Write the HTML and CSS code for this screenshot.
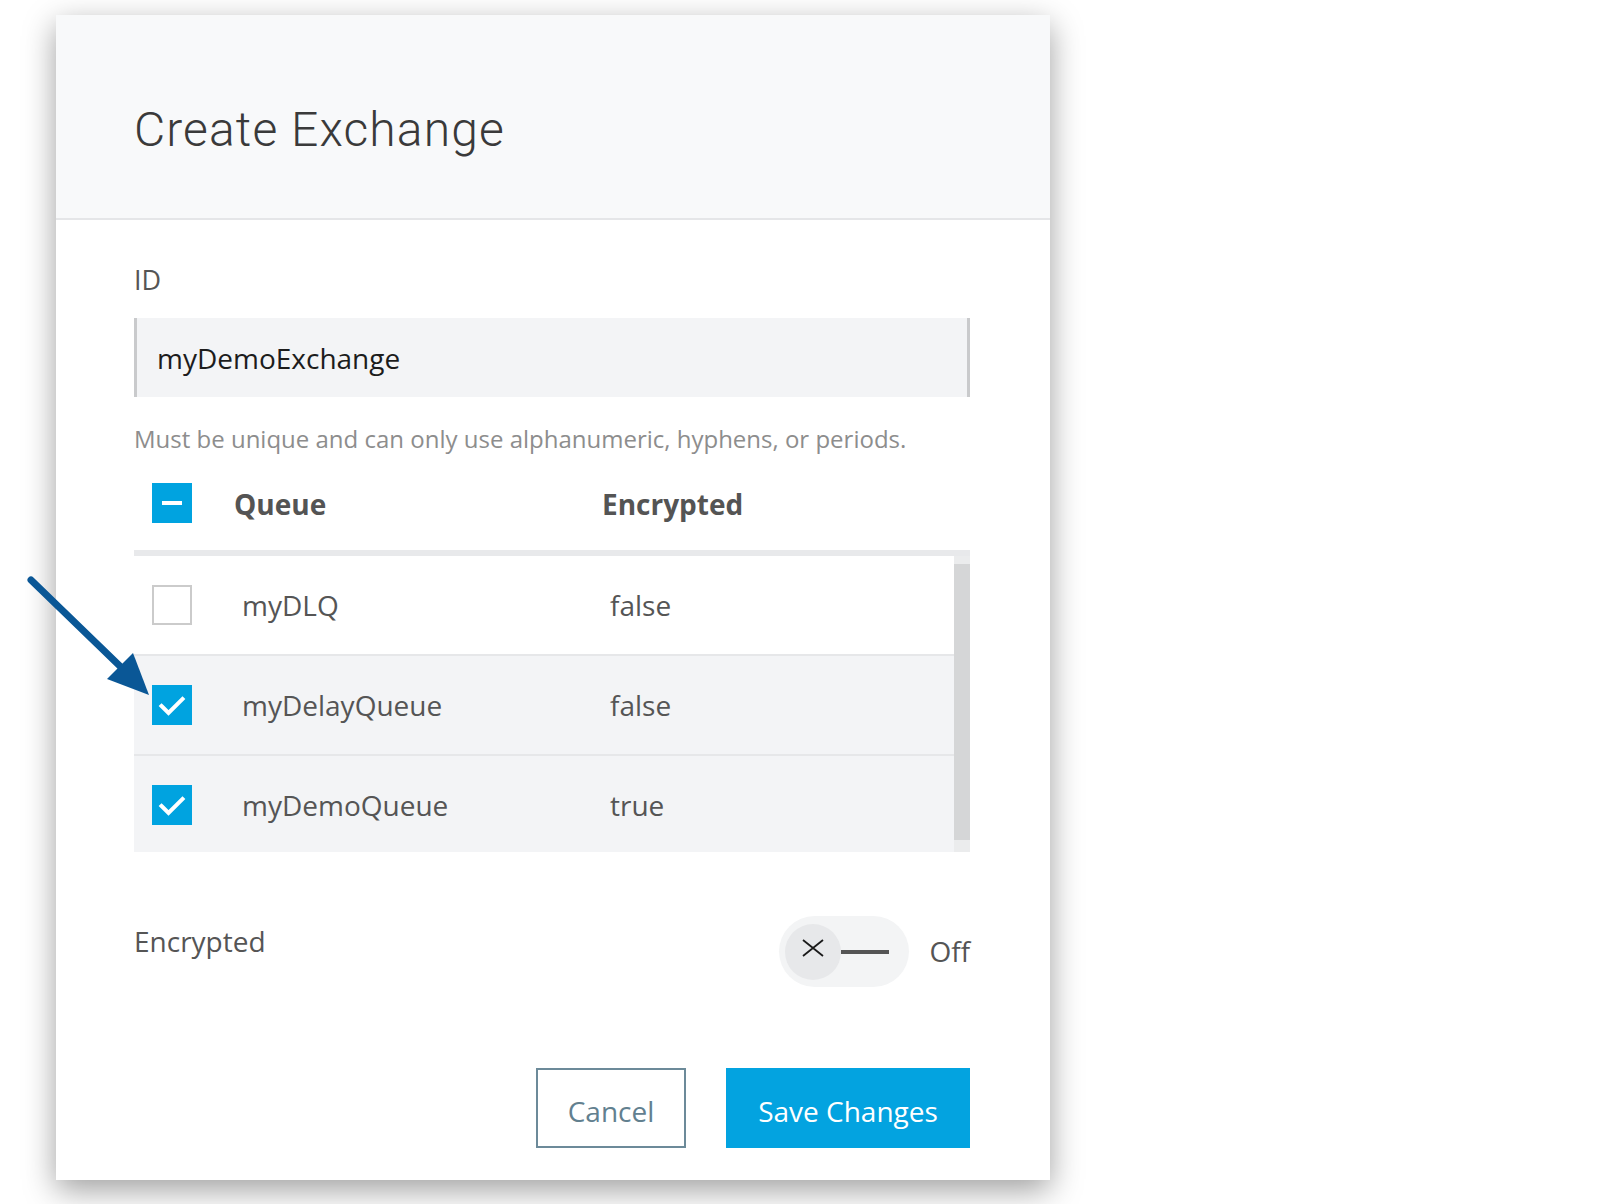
FILE: index.html
```html
<!DOCTYPE html>
<html lang="en">
<head>
<meta charset="utf-8">
<title>Create Exchange</title>
<link rel="stylesheet" href="styles.css">
</head>
<body>
<div class="page">
  <div class="modal">
    <header class="modal-header">
      <h1 class="title">Create Exchange</h1>
    </header>
    <div class="modal-body">
      <div class="field-label">ID</div>
      <div class="input">myDemoExchange</div>
      <p class="help">Must be unique and can only use alphanumeric, hyphens, or periods.</p>

      <div class="table">
        <div class="thead">
          <span class="cb cb-on"><span class="dash"></span></span>
          <span class="th th-queue">Queue</span>
          <span class="th">Encrypted</span>
        </div>
        <div class="tbody">
          <div class="rows">
            <div class="row">
              <span class="cb cb-off"></span>
              <span class="td td-name">myDLQ</span>
              <span class="td">false</span>
            </div>
            <div class="row row-selected">
              <span class="cb cb-on"><svg class="check" viewBox="0 0 40 40"><polyline points="9.5,21 16.5,28 30.5,14"/></svg></span>
              <span class="td td-name">myDelayQueue</span>
              <span class="td">false</span>
            </div>
            <div class="row row-selected">
              <span class="cb cb-on"><svg class="check" viewBox="0 0 40 40"><polyline points="9.5,21 16.5,28 30.5,14"/></svg></span>
              <span class="td td-name">myDemoQueue</span>
              <span class="td">true</span>
            </div>
          </div>
          <div class="scrollbar"><div class="thumb"></div></div>
        </div>
      </div>

      <div class="toggle-row">
        <span class="toggle-label">Encrypted</span>
        <span class="toggle">
          <span class="knob"><svg class="x" viewBox="0 0 22 18"><path d="M1 1 L21 17 M21 1 L1 17"/></svg></span>
          <span class="track-line"></span>
        </span>
        <span class="toggle-state">Off</span>
      </div>

      <div class="actions">
        <button class="btn btn-secondary">Cancel</button>
        <button class="btn btn-primary">Save Changes</button>
      </div>
    </div>
  </div>

  <svg class="arrow" viewBox="0 0 200 720" width="200" height="720">
    <line x1="31" y1="580" x2="125" y2="671"/>
    <polygon points="149,695 107,679 133,653"/>
  </svg>
</div>
</body>
</html>
```

FILE: styles.css
```css
* { box-sizing: border-box; }

html, body {
  margin: 0;
  padding: 0;
  background: #ffffff;
}

body {
  font-family: "Open Sans", "Liberation Sans", sans-serif;
  color: #555555;
}

.page {
  position: relative;
  padding: 15px 0 0 56px;
  height: 1204px;
  overflow: hidden;
}

.modal {
  width: 994px;
  background: #ffffff;
  box-shadow: 0 10px 30px rgba(0, 0, 0, 0.38);
}

.modal-header {
  background: #f8f9fa;
  border-bottom: 2px solid #e5e6e8;
  padding: 91px 78px 64px 78px;
}

.title {
  margin: 0;
  font-family: Roboto, "Liberation Sans", sans-serif;
  font-weight: 300;
  font-size: 48px;
  line-height: 48px;
  color: #3a3a3a;
  letter-spacing: 1.1px;
}

.modal-body {
  padding: 42px 80px 32px 78px;
}

.field-label {
  font-size: 27px;
  line-height: 36px;
  color: #555555;
}

.input {
  margin-top: 20px;
  height: 79px;
  background: #f3f4f6;
  border-left: 3px solid #c9cacc;
  border-right: 3px solid #c9cacc;
  padding-left: 20px;
  display: flex;
  align-items: center;
  font-size: 28px;
  color: #1c1c1c;
}

.help {
  margin: 26px 0 0 0;
  font-size: 24px;
  line-height: 32px;
  color: #8d8d8d;
}

.thead {
  height: 101px;
  display: flex;
  align-items: center;
  padding-left: 18px;
  border-bottom: 6px solid #e8e9eb;
  padding-top: 0;
}

.th {
  font-size: 28px;
  line-height: 38px;
  font-weight: 700;
  color: #545454;
  padding-top: 2px;
}

.th-queue {
  margin-left: 42px;
  width: 368px;
}

.cb {
  width: 40px;
  height: 40px;
  flex: none;
  display: flex;
  align-items: center;
  justify-content: center;
}

.cb-on {
  background: #00a3e0;
}

.cb-off {
  background: #ffffff;
  border: 2px solid #cbcbcb;
}

.dash {
  width: 20px;
  height: 4px;
  background: #ffffff;
}

.check {
  width: 40px;
  height: 40px;
}

.check polyline {
  fill: none;
  stroke: #ffffff;
  stroke-width: 4;
  stroke-linecap: square;
}

.tbody {
  height: 296px;
  display: flex;
  overflow: hidden;
}

.rows {
  flex: 1;
}

.row {
  height: 100px;
  display: flex;
  align-items: center;
  padding-left: 18px;
  border-bottom: 2px solid #e6e7e9;
  background: #ffffff;
}

.row-selected {
  background: #f3f4f6;
}

.td {
  font-size: 28px;
  line-height: 38px;
  color: #555555;
}

.td-name {
  margin-left: 50px;
  width: 368px;
}

.scrollbar {
  width: 16px;
  flex: none;
  background: #ebeced;
  padding: 8px 0 12px 0;
  display: flex;
}

.thumb {
  flex: 1;
  background: #d5d6d7;
}

.toggle-row {
  margin-top: 64px;
  display: flex;
  align-items: center;
  height: 71px;
}

.toggle-label {
  align-self: flex-start;
  margin-top: 6px;
  font-size: 28px;
  line-height: 38px;
  color: #555555;
  flex: 1;
}

.toggle {
  width: 130px;
  height: 71px;
  border-radius: 36px;
  background: #f3f4f5;
  display: flex;
  align-items: center;
  padding-left: 6px;
}

.knob {
  width: 56px;
  height: 56px;
  border-radius: 50%;
  background: #e7e8ea;
  flex: none;
  display: flex;
  justify-content: center;
  align-items: flex-start;
  padding-top: 15px;
}

.x {
  width: 22px;
  height: 18px;
}

.x path {
  stroke: #1a1a1a;
  stroke-width: 1.8;
  fill: none;
}

.track-line {
  width: 48px;
  height: 4px;
  background: #555555;
}

.toggle-state {
  margin-left: 20px;
  font-size: 28px;
  line-height: 38px;
  color: #555555;
  padding-bottom: 2px;
}

.actions {
  margin-top: 81px;
  display: flex;
  justify-content: flex-end;
  gap: 40px;
}

.btn {
  height: 80px;
  font-family: "Open Sans", "Liberation Sans", sans-serif;
  font-size: 28px;
  border-radius: 0;
  cursor: pointer;
  padding: 5px 0 0 0;
}

.btn-secondary {
  width: 150px;
  background: #ffffff;
  border: 2px solid #6c8a99;
  color: #62808f;
}

.btn-primary {
  width: 244px;
  background: #03a3e0;
  border: none;
  color: #ffffff;
}

.arrow {
  position: absolute;
  left: 0;
  top: 0;
  pointer-events: none;
}

.arrow line {
  stroke: #0a5796;
  stroke-width: 7;
  stroke-linecap: round;
}

.arrow polygon {
  fill: #0a5796;
}
```
